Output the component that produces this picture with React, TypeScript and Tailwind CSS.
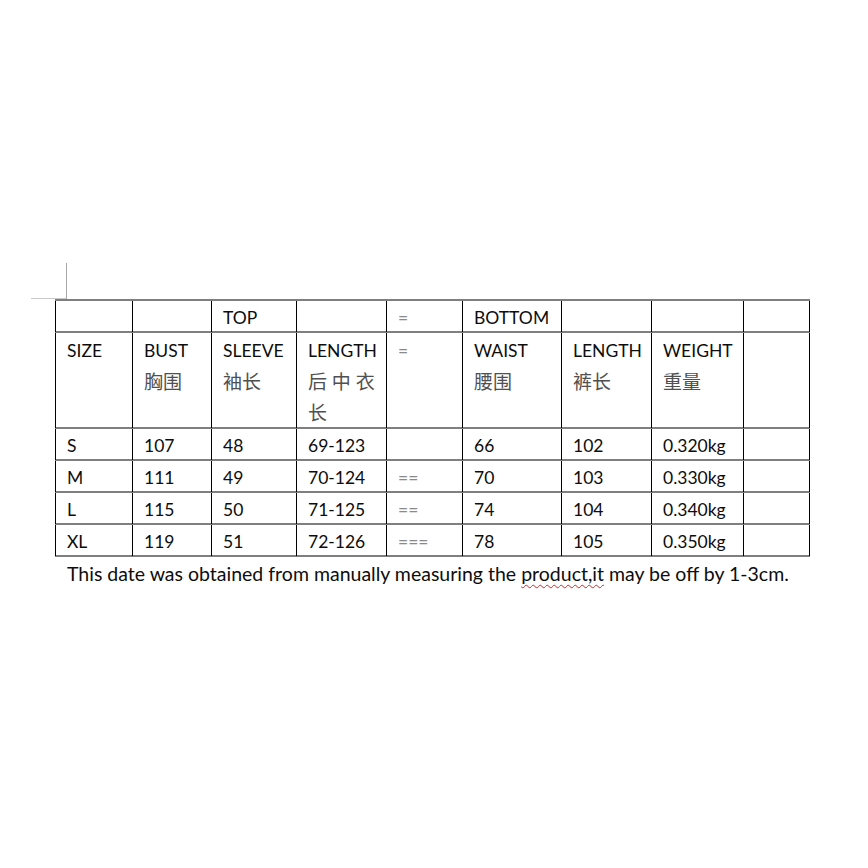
const cols = "grid grid-cols-[77px_79px_85px_90px_76px_99px_90px_92px_67px]";

const font = { fontFamily: "Lato, 'Noto Sans CJK SC', sans-serif" };

type Cell = { en?: string; zh?: string; muted?: boolean };

const header: Cell[] = [
  {},
  {},
  { en: "TOP" },
  {},
  { en: "=", muted: true },
  { en: "BOTTOM" },
  {},
  {},
  {},
];

const labels: Cell[] = [
  { en: "SIZE" },
  { en: "BUST", zh: "胸围" },
  { en: "SLEEVE", zh: "袖长" },
  { en: "LENGTH", zh: "后 中 衣\n长" },
  { en: "=", muted: true },
  { en: "WAIST", zh: "腰围" },
  { en: "LENGTH", zh: "裤长" },
  { en: "WEIGHT", zh: "重量" },
  {},
];

const sizes = [
  ["S", "107", "48", "69-123", "", "66", "102", "0.320kg"],
  ["M", "111", "49", "70-124", "==", "70", "103", "0.330kg"],
  ["L", "115", "50", "71-125", "==", "74", "104", "0.340kg"],
  ["XL", "119", "51", "72-126", "===", "78", "105", "0.350kg"],
];

function Row({ cells, tall, last }: { cells: Cell[]; tall?: boolean; last?: boolean }) {
  return (
    <div
      className={`${cols} border-t-2 border-[#7f7f7f] ${
        last ? "h-[34px] border-b-2" : tall ? "h-[96px]" : "h-[32px]"
      }`}
    >
      {cells.map((c, i) => (
        <div
          key={i}
          className={`border-l border-black pl-[11px] pt-[2px] text-[17.5px] ${
            tall ? "leading-[31px]" : "leading-[29px]"
          } ${i === cells.length - 1 ? "border-r" : ""} ${c.muted ? "text-[#8a8a8a]" : "text-[#0d0d0d]"}`}
        >
          {c.en && <div>{c.en}</div>}
          {c.zh && (
            <div className="whitespace-pre-line text-[19px] text-[#505050]">{c.zh}</div>
          )}
        </div>
      ))}
    </div>
  );
}

export default function App() {
  return (
    <div className="relative h-[868px] w-[868px] bg-white" style={font}>
      {/* page corner mark */}
      <div className="absolute left-[66px] top-[263px] h-[36px] w-px bg-[#a8a8a8]" />
      <div className="absolute left-[31px] top-[298px] h-px w-[35px] bg-[#c8c8c8]" />

      <div className="pl-[55px] pt-[299px]">
        <div className="w-[755px]">
          <Row cells={header} />
          <Row cells={labels} tall />
          {sizes.map((r, i) => (
            <Row
              key={r[0]}
              cells={[...r.map((v, j) => ({ en: v, muted: j === 4 })), {}]}
              last={i === sizes.length - 1}
            />
          ))}
        </div>
        <p className="pl-[12px] text-[19.5px] leading-[34px] text-[#0d0d0d]">
          This date was obtained from manually measuring the{" "}
          <span className="underline decoration-wavy decoration-[#d22] decoration-1 underline-offset-[3px]">
            product,it
          </span>{" "}
          may be off by 1-3cm.
        </p>
      </div>
    </div>
  );
}
